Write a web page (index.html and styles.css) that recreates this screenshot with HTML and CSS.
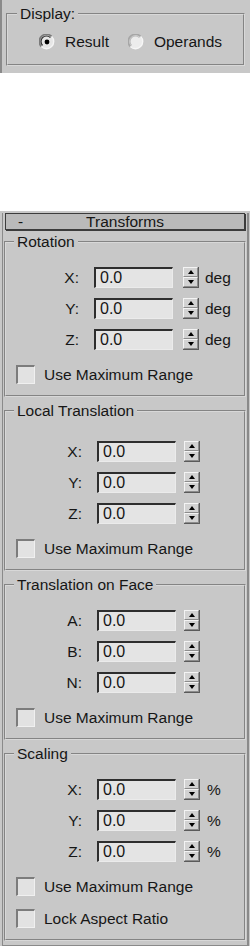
FILE: index.html
```html
<!DOCTYPE html>
<html>
<head>
<meta charset="utf-8">
<link rel="stylesheet" href="styles.css">
</head>
<body>
<div class="panel panel-top">
  <fieldset class="group">
    <legend>Display:</legend>
    <div class="radios">
      <span class="radio"><svg class="rdo" viewBox="0 0 16 16" width="16" height="16"><circle cx="8" cy="8" r="6.5" fill="#e6e6e6"/><path d="M2.4 12.6 A6.5 6.5 0 0 1 12.6 2.4" fill="none" stroke="#7a7a7a" stroke-width="1.6"/><path d="M3.6 11.4 A5 5 0 0 1 11.4 3.6" fill="none" stroke="#2e2e2e" stroke-width="1.2"/><path d="M12.6 2.4 A6.5 6.5 0 0 1 2.4 12.6" fill="none" stroke="#f4f4f4" stroke-width="1.4"/><circle cx="8" cy="8" r="2.4" fill="#000"/></svg>Result</span>
      <span class="radio"><svg class="rdo" viewBox="0 0 16 16" width="16" height="16"><circle cx="8" cy="8" r="6.5" fill="#ececec"/><path d="M2.4 12.6 A6.5 6.5 0 0 1 12.6 2.4" fill="none" stroke="#a6a6a6" stroke-width="1.6"/><path d="M3.6 11.4 A5 5 0 0 1 11.4 3.6" fill="none" stroke="#bdbdbd" stroke-width="1.2"/><path d="M12.6 2.4 A6.5 6.5 0 0 1 2.4 12.6" fill="none" stroke="#f6f6f6" stroke-width="1.4"/></svg>Operands</span>
    </div>
  </fieldset>
</div>
<div class="spacer"></div>
<div class="panel rollout">
  <div class="rollout-body">
    <div class="rollout-head"><span class="minus">-</span><span class="title">Transforms</span><span></span></div>

    <fieldset class="group rot">
      <legend>Rotation</legend>
      <div class="rows">
        <div class="row"><span class="lbl">X:</span><span class="field">0.0</span><span class="spin"><i class="up"></i><i class="dn"></i></span><span class="unit">deg</span></div>
        <div class="row"><span class="lbl">Y:</span><span class="field">0.0</span><span class="spin"><i class="up"></i><i class="dn"></i></span><span class="unit">deg</span></div>
        <div class="row"><span class="lbl">Z:</span><span class="field">0.0</span><span class="spin"><i class="up"></i><i class="dn"></i></span><span class="unit">deg</span></div>
      </div>
      <div class="check"><span class="box"></span>Use Maximum Range</div>
    </fieldset>

    <fieldset class="group local">
      <legend>Local Translation</legend>
      <div class="rows">
        <div class="row"><span class="lbl">X:</span><span class="field">0.0</span><span class="spin"><i class="up"></i><i class="dn"></i></span></div>
        <div class="row"><span class="lbl">Y:</span><span class="field">0.0</span><span class="spin"><i class="up"></i><i class="dn"></i></span></div>
        <div class="row"><span class="lbl">Z:</span><span class="field">0.0</span><span class="spin"><i class="up"></i><i class="dn"></i></span></div>
      </div>
      <div class="check"><span class="box"></span>Use Maximum Range</div>
    </fieldset>

    <fieldset class="group">
      <legend>Translation on Face</legend>
      <div class="rows">
        <div class="row"><span class="lbl">A:</span><span class="field">0.0</span><span class="spin"><i class="up"></i><i class="dn"></i></span></div>
        <div class="row"><span class="lbl">B:</span><span class="field">0.0</span><span class="spin"><i class="up"></i><i class="dn"></i></span></div>
        <div class="row"><span class="lbl">N:</span><span class="field">0.0</span><span class="spin"><i class="up"></i><i class="dn"></i></span></div>
      </div>
      <div class="check"><span class="box"></span>Use Maximum Range</div>
    </fieldset>

    <fieldset class="group">
      <legend>Scaling</legend>
      <div class="rows">
        <div class="row"><span class="lbl">X:</span><span class="field">0.0</span><span class="spin"><i class="up"></i><i class="dn"></i></span><span class="unit">%</span></div>
        <div class="row"><span class="lbl">Y:</span><span class="field">0.0</span><span class="spin"><i class="up"></i><i class="dn"></i></span><span class="unit">%</span></div>
        <div class="row"><span class="lbl">Z:</span><span class="field">0.0</span><span class="spin"><i class="up"></i><i class="dn"></i></span><span class="unit">%</span></div>
      </div>
      <div class="check"><span class="box"></span>Use Maximum Range</div>
      <div class="check check2"><span class="box"></span>Lock Aspect Ratio</div>
    </fieldset>
  </div>
</div>
</body>
</html>
```

FILE: styles.css
```css
* { box-sizing: border-box; }
html, body { margin: 0; padding: 0; background: #fff; }
body {
  width: 250px;
  font-family: "Liberation Sans", Arial, sans-serif;
  font-size: 15.5px;
  color: #161616;
}
.panel { background: #c8c8c8; }

.panel-top {
  height: 73px;
  border-left: 2px solid #8a8a8a;
  padding: 5px 5px 0 4px;
}
.spacer { height: 138px; }

.group {
  margin: 0;
  padding: 0 0 11px 0;
  border: 2px groove #d8d8d8;
  min-width: 0;
}
.group legend {
  margin-left: 8px;
  padding: 0 3px;
  line-height: 18px;
}
.panel-top .group { padding-bottom: 13px; }
.panel-top .group legend { margin-left: 9px; }

.radios {
  display: flex;
  align-items: center;
  height: 18px;
  margin-top: 10px;
  padding-left: 31px;
}
.radio { display: flex; align-items: center; }
.radio:first-child { margin-right: 19px; }
.rdo { margin-right: 10px; flex: none; }

.rollout { padding: 2px 1px 0 2px; }
.rollout-body {
  border-left: 1px solid #8a8a8a;
  border-right: 2px solid #8a8a8a;
  border-bottom: 1px solid #8a8a8a;
  padding: 0 1px 4px 1px;
}
.rollout-head {
  display: grid;
  grid-template-columns: 1fr auto 1fr;
  align-items: center;
  height: 17px;
  margin: 0 1px 3px 1px;
  background: #bababa;
  border: 1px solid #3c3c3c;
  box-shadow: 1px 1px 0 #3c3c3c;
  line-height: 15px;
}
.minus { padding-left: 12px; }
.title { text-align: center; }

.group + .group { margin-top: 5px; }

.rows {
  display: flex;
  flex-direction: column;
  gap: 10px;
  padding-top: 16px;
}
.local .rows { padding-top: 21px; }
.row {
  display: flex;
  align-items: center;
  height: 21px;
}
.lbl { width: 76px; text-align: right; flex: none; }
.field {
  width: 79px;
  height: 21px;
  margin-left: 15px;
  flex: none;
  background: #e4e4e4;
  border-top: 2px solid #2e2e2e;
  border-left: 2px solid #2e2e2e;
  border-right: 1px solid #ebebeb;
  border-bottom: 1px solid #ebebeb;
  padding-left: 4px;
  font-size: 16px;
  line-height: 18px;
}
.spin {
  display: flex;
  flex-direction: column;
  width: 16px;
  height: 21px;
  margin-left: 8px;
  flex: none;
  border-right: 1px solid #5a5a5a;
  border-bottom: 1px solid #5a5a5a;
}
.spin i {
  flex: 1;
  display: flex;
  align-items: center;
  justify-content: center;
  background: #d2d2d2;
  border-top: 1px solid #f4f4f4;
  border-left: 1px solid #f4f4f4;
  border-right: 1px solid #8c8c8c;
  border-bottom: 1px solid #8c8c8c;
}
.spin i::after {
  content: "";
  width: 0;
  height: 0;
  border-left: 3.5px solid transparent;
  border-right: 3.5px solid transparent;
}
.spin .up::after { border-bottom: 4px solid #000; }
.spin .dn::after { border-top: 4px solid #000; }
.unit { margin-left: 7px; }

.rot .lbl { width: 73px; }
.rot .spin { margin-left: 10px; }
.rot .unit { margin-left: 6px; }

.check {
  display: flex;
  align-items: center;
  height: 19px;
  margin: 15px 0 0 10px;
}
.check2 { margin-top: 13px; }
.box {
  width: 19px;
  height: 19px;
  margin-right: 9px;
  flex: none;
  background: #e2e2e2;
  border-top: 2px solid #7c7c7c;
  border-left: 2px solid #7c7c7c;
  border-right: 1px solid #f0f0f0;
  border-bottom: 1px solid #f0f0f0;
}
```
